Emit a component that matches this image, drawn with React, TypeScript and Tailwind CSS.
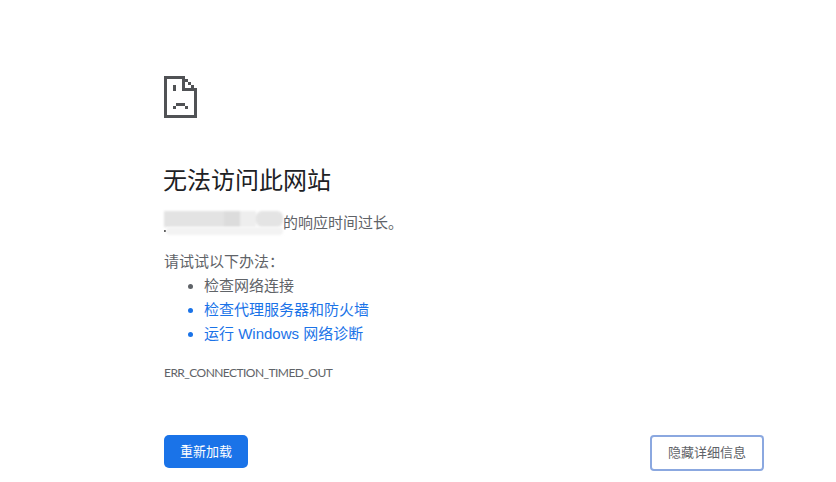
export default function App() {
  const font = "font-['Liberation_Sans','Noto_Sans_CJK_SC',sans-serif]";
  return (
    <div className={`${font} w-[836px] h-[482px] bg-white overflow-hidden pl-[164px] pr-[72px] pt-[76px] text-[#5f6368] text-[15px]`}>
      <svg width="33" height="42" viewBox="0 0 33 42" shapeRendering="crispEdges" fill="#505255" className="block">
        <rect x="0" y="0" width="21" height="3" />
        <rect x="0" y="0" width="3" height="42" />
        <rect x="0" y="39" width="33" height="3" />
        <rect x="30" y="12" width="3" height="30" />
        <rect x="18" y="0" width="3" height="15" />
        <rect x="18" y="12" width="15" height="3" />
        <rect x="21" y="3" width="3" height="3" />
        <rect x="24" y="6" width="3" height="3" />
        <rect x="27" y="9" width="3" height="3" />
        <rect x="9" y="9" width="3" height="6" />
        <rect x="12" y="27" width="9" height="3" />
        <rect x="9" y="30" width="3" height="3" />
        <rect x="21" y="30" width="3" height="3" />
      </svg>
      <h1 className="mt-[46px] -ml-px text-[24px] leading-[34px] font-normal text-[#202124]">无法访问此网站</h1>
      <p className="mt-[13px] h-[24px] flex items-center leading-[24px]">
        <span className="w-[119px] h-[24px] shrink-0 flex flex-col">
          <span className="flex h-[16px] shrink-0 blur-[1px]">
            <span className="w-[60px] bg-[#e3e3e3]" />
            <span className="w-[16px] bg-[#dcdcdc]" />
            <span className="w-[16px] bg-[#eeeeee]" />
            <span className="w-[27px] bg-[#e4e4e4] rounded-[6px]" />
          </span>
          <span className="flex items-end h-[8px] shrink-0">
            <span className="w-[2px] h-[2px] mb-[3px] bg-[#555555] shrink-0" />
            <span className="flex-1 h-[8px] bg-[#f3f3f3] blur-[1px] rounded-[4px]" />
          </span>
        </span>
        <span>的响应时间过长。</span>
      </p>
      <p className="mt-[15px] leading-[24px]">请试试以下办法：</p>
      <ul className="pl-[40px] list-disc leading-[24px]">
        <li>检查网络连接</li>
        <li className="text-[#1a73e8]">检查代理服务器和防火墙</li>
        <li className="text-[#1a73e8]">运行 Windows 网络诊断</li>
      </ul>
      <div className="mt-[19px] text-[12px] leading-[16px] tracking-[-0.55px] font-['Lato','Noto_Sans_CJK_SC',sans-serif]">ERR_CONNECTION_TIMED_OUT</div>
      <div className="mt-[54px] flex justify-between items-start">
        <button className="w-[84px] h-[33px] bg-[#1a73e8] rounded-[5px] text-white text-[13px] font-normal">重新加载</button>
        <button className="w-[114px] h-[36px] bg-white rounded-[4px] border-2 border-[#8ba8e0] text-[#5f6368] text-[13px]">隐藏详细信息</button>
      </div>
    </div>
  );
}
